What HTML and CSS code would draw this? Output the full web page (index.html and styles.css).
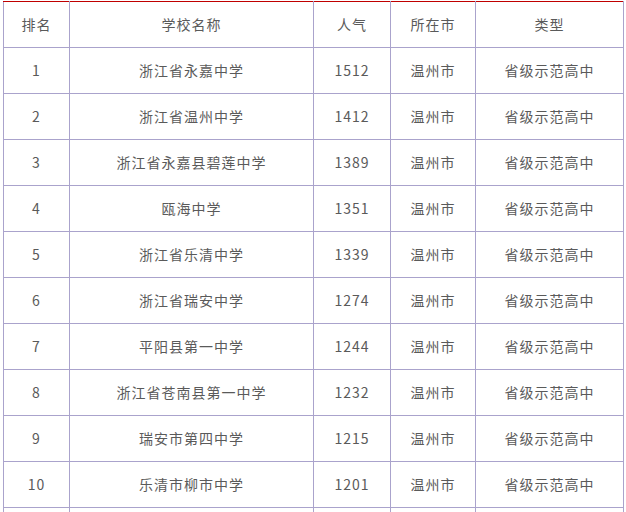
FILE: index.html
```html
<!DOCTYPE html>
<html lang="zh-CN">
<head>
<meta charset="utf-8">
<title>温州高中排名</title>
<link rel="stylesheet" href="styles.css">
</head>
<body>
<div class="wrap">
<table class="rank">
<colgroup>
<col class="c-rank"><col class="c-name"><col class="c-pop"><col class="c-city"><col class="c-type">
</colgroup>
<thead>
<tr><th>排名</th><th>学校名称</th><th>人气</th><th>所在市</th><th>类型</th></tr>
</thead>
<tbody>
<tr><td>1</td><td>浙江省永嘉中学</td><td>1512</td><td>温州市</td><td>省级示范高中</td></tr>
<tr><td>2</td><td>浙江省温州中学</td><td>1412</td><td>温州市</td><td>省级示范高中</td></tr>
<tr><td>3</td><td>浙江省永嘉县碧莲中学</td><td>1389</td><td>温州市</td><td>省级示范高中</td></tr>
<tr><td>4</td><td>瓯海中学</td><td>1351</td><td>温州市</td><td>省级示范高中</td></tr>
<tr><td>5</td><td>浙江省乐清中学</td><td>1339</td><td>温州市</td><td>省级示范高中</td></tr>
<tr><td>6</td><td>浙江省瑞安中学</td><td>1274</td><td>温州市</td><td>省级示范高中</td></tr>
<tr><td>7</td><td>平阳县第一中学</td><td>1244</td><td>温州市</td><td>省级示范高中</td></tr>
<tr><td>8</td><td>浙江省苍南县第一中学</td><td>1232</td><td>温州市</td><td>省级示范高中</td></tr>
<tr><td>9</td><td>瑞安市第四中学</td><td>1215</td><td>温州市</td><td>省级示范高中</td></tr>
<tr><td>10</td><td>乐清市柳市中学</td><td>1201</td><td>温州市</td><td>省级示范高中</td></tr>
<tr class="empty"><td></td><td></td><td></td><td></td><td></td></tr>
</tbody>
</table>
</div>
</body>
</html>
```
FILE: styles.css
```css
html, body {
  margin: 0;
  padding: 0;
  background: #ffffff;
  overflow: hidden;
}

.wrap {
  padding: 1px 0 0 3px;
}

.rank {
  border-collapse: collapse;
  table-layout: fixed;
  width: 620px;
  font-family: "Noto Sans CJK SC", "Noto Sans", sans-serif;
  font-size: 14px;
  letter-spacing: 1px;
  color: #5a5a5a;
  border-top: 1px solid #c00000;
}

.c-rank { width: 66px; }
.c-name { width: 244px; }
.c-pop  { width: 77px; }
.c-city { width: 85px; }
.c-type { width: 148px; }

.rank th,
.rank td {
  border: 1px solid #aaa3cc;
  height: 43px;
  padding: 0 0 2px 0;
  text-align: center;
  vertical-align: middle;
  font-weight: normal;
  line-height: 20px;
}

.rank thead th {
  border-top: 1px solid #c00000;
}
```
